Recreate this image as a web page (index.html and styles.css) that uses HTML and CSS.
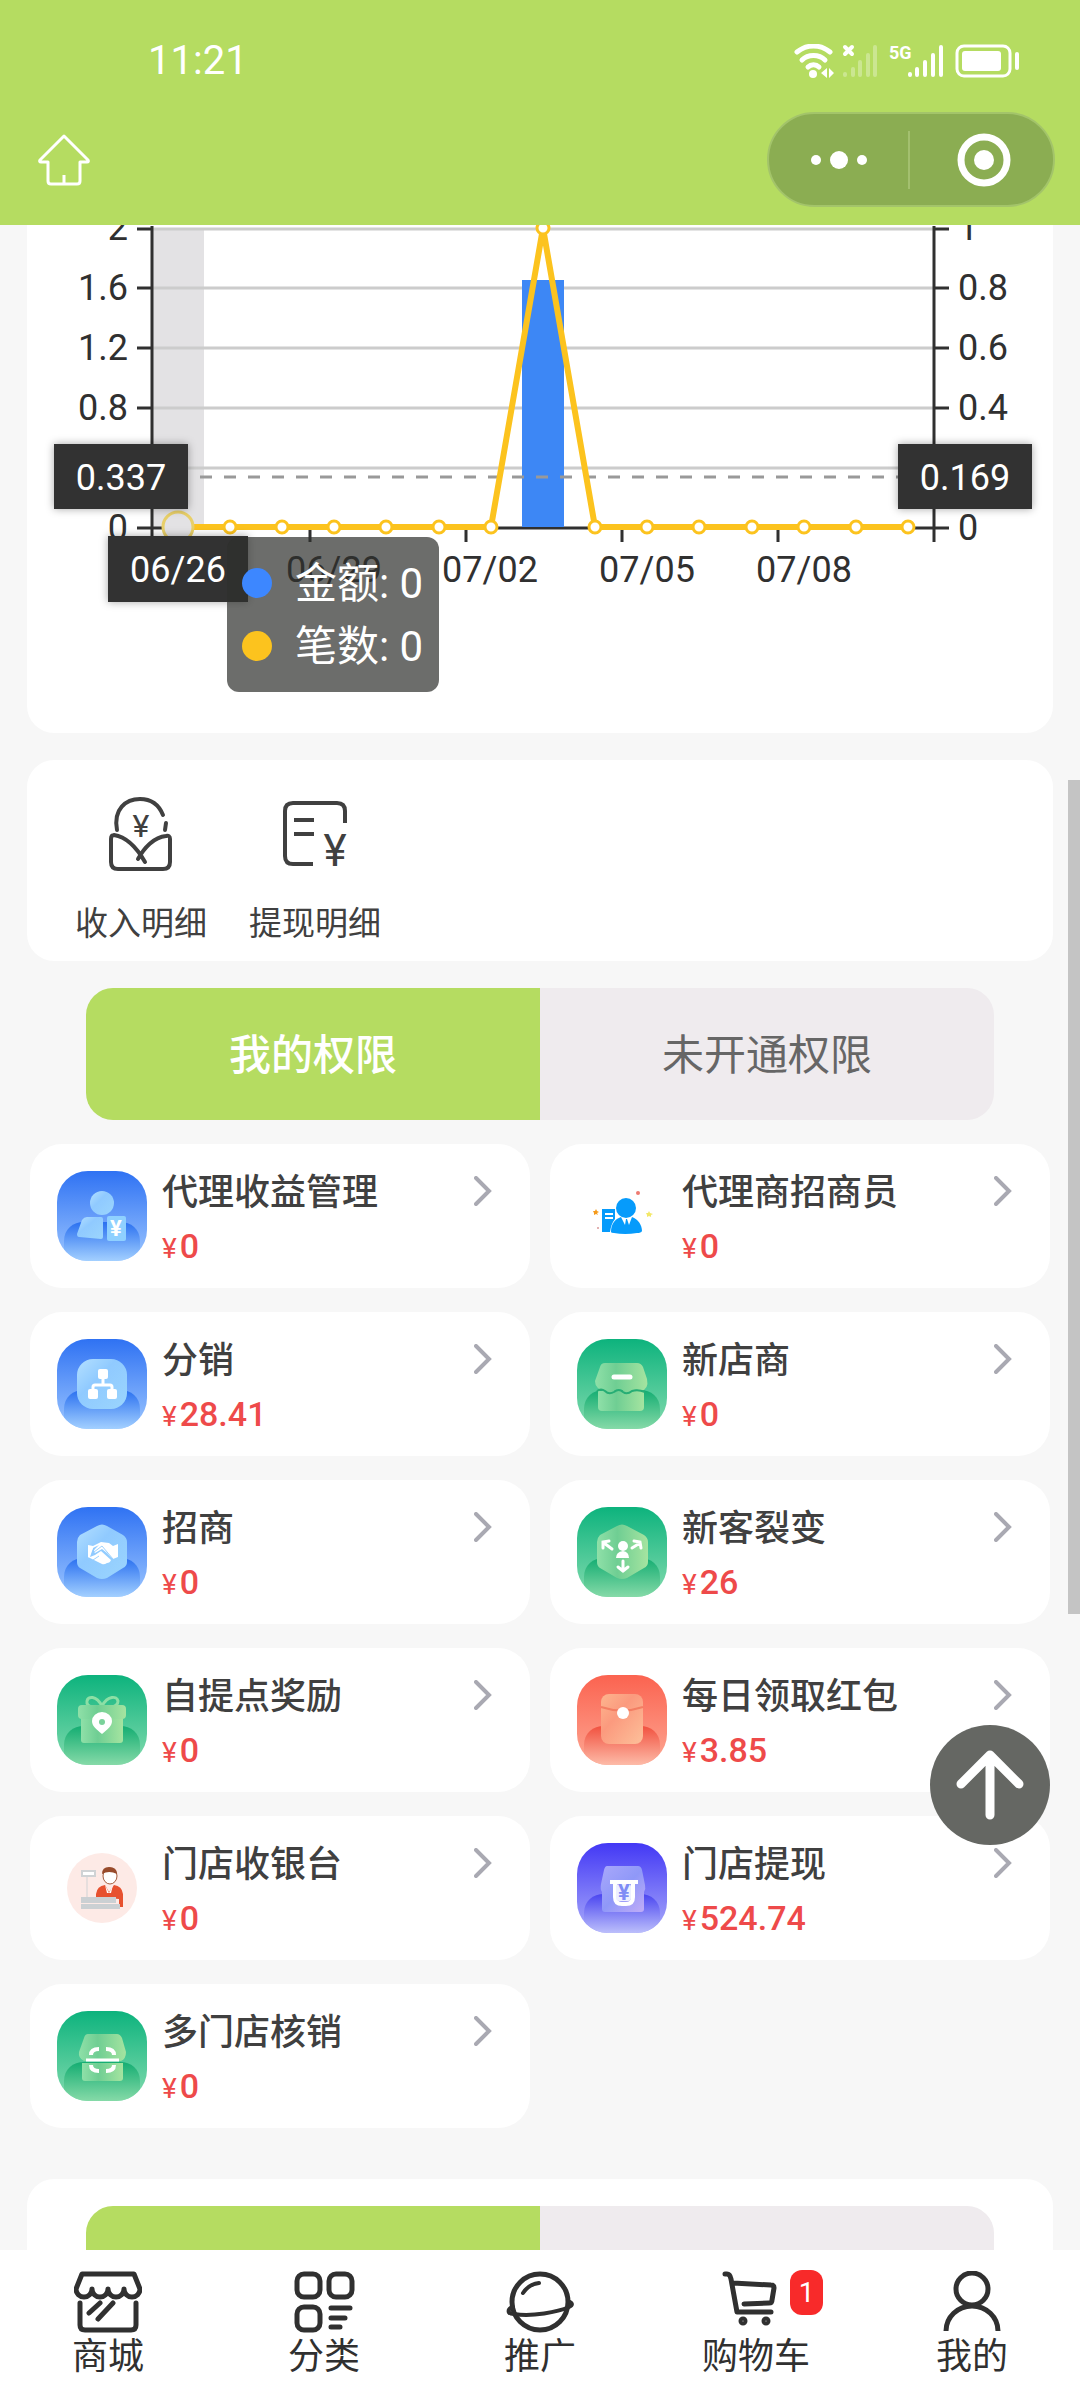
FILE: index.html
```html
<!DOCTYPE html>
<html lang="zh-CN">
<head>
    <meta charset="UTF-8">
    <meta name="viewport" content="width=device-width, initial-scale=1.0">
    <title>我的权限</title>
    <link rel="stylesheet" href="styles.css">
</head>
<body>
    <!-- Shared gradients and shapes -->
    <svg class="defs" width="0" height="0" aria-hidden="true">
        <defs>
            <linearGradient id="blue" x1="0" y1="0" x2="0" y2="1"><stop offset="0" stop-color="#2f72f3"/><stop offset="1" stop-color="#9cc6ff"/></linearGradient>
            <linearGradient id="blueHill" x1="0" y1="0" x2="0" y2="1"><stop offset="0" stop-color="#2a70f0"/><stop offset="1" stop-color="#a3d0ff"/></linearGradient>
            <linearGradient id="blueFront" x1="0" y1="0" x2="1" y2="1"><stop offset="0" stop-color="#b4e0ff"/><stop offset="0.4" stop-color="#90caff"/><stop offset="1" stop-color="#9bd5fd"/></linearGradient>
            <linearGradient id="green" x1="0" y1="0" x2="0" y2="1"><stop offset="0" stop-color="#0db37d"/><stop offset="1" stop-color="#83dbae"/></linearGradient>
            <linearGradient id="greenHill" x1="0" y1="0" x2="0" y2="1"><stop offset="0" stop-color="#14ad72"/><stop offset="1" stop-color="#86daa8"/></linearGradient>
            <linearGradient id="greenFront" x1="0" y1="0" x2="1" y2="0"><stop offset="0" stop-color="#8fe0a8"/><stop offset="0.4" stop-color="#6fce93"/><stop offset="1" stop-color="#a5e4a0"/></linearGradient>
            <linearGradient id="red" x1="0" y1="0" x2="0" y2="1"><stop offset="0" stop-color="#fb6350"/><stop offset="1" stop-color="#fda793"/></linearGradient>
            <linearGradient id="redHill" x1="0" y1="0" x2="0" y2="1"><stop offset="0" stop-color="#f1513f"/><stop offset="1" stop-color="#fdbba8"/></linearGradient>
            <linearGradient id="redFront" x1="0" y1="0" x2="1" y2="1"><stop offset="0" stop-color="#fdb58e"/><stop offset="0.4" stop-color="#fb9a7e"/><stop offset="1" stop-color="#fdc09a"/></linearGradient>
            <linearGradient id="indigo" x1="0" y1="0" x2="0" y2="1"><stop offset="0" stop-color="#4338f5"/><stop offset="1" stop-color="#a9abfa"/></linearGradient>
            <linearGradient id="indigoHill" x1="0" y1="0" x2="0" y2="1"><stop offset="0" stop-color="#4a45f0"/><stop offset="1" stop-color="#bcbffb"/></linearGradient>
            <linearGradient id="indigoFront" x1="0" y1="0" x2="1" y2="1"><stop offset="0" stop-color="#a9a8fb"/><stop offset="0.5" stop-color="#8f98f8"/><stop offset="1" stop-color="#c2adf7"/></linearGradient>
            <filter id="labelShadow" x="-20%" y="-30%" width="140%" height="160%"><feDropShadow dx="0" dy="0" stdDeviation="4" flood-color="#000" flood-opacity="0.35"/></filter>
            <symbol id="hill" viewBox="0 0 90 90"><path d="M7 78V70C7 58 16 51 27 51H63C74 51 83 58 83 70V78A31 31 0 0 1 59 90H31A31 31 0 0 1 7 78Z"/></symbol>
            <symbol id="chevron" viewBox="0 0 18 30"><path d="M2 2L15 15L2 28" fill="none" stroke="#a9a9b2" stroke-width="4" stroke-linecap="round"/></symbol>
        </defs>
    </svg>

    <!-- Header -->
    <header class="header">
        <div class="status-bar">
            <span class="clock">11:21</span>
            <svg class="status-icons" width="226" height="34" viewBox="0 0 226 34" aria-hidden="true">
                <g fill="none" stroke="#fff" stroke-width="5" stroke-linecap="round">
                    <path d="M3 8C13 0 26 0 36 8"/>
                    <path d="M8 16C14 10 25 10 31 16"/>
                    <path d="M14 23C17 20 22 20 25 23"/>
                </g>
                <circle cx="19" cy="30" r="4" fill="#fff"/>
                <path d="M27 29L33 24V34ZM40 29L35 24V34Z" fill="#fff"/>
                <path d="M51 3L58 10M58 3L51 10" stroke="#fff" stroke-width="4" stroke-linecap="round"/>
                <g stroke="#fff" stroke-width="4" stroke-linecap="round" opacity="0.3">
                    <path d="M51 30V31M59 25V31M66 18V31M74 11V31M81 3V31"/>
                </g>
                <text x="95" y="15" class="net">5G</text>
                <path d="M116 30V31M123 25V31M131 18V31M139 11V31M147 3V31" stroke="#fff" stroke-width="4" stroke-linecap="round"/>
                <rect x="163" y="2" width="53" height="30" rx="7" fill="none" stroke="#fff" stroke-width="3"/>
                <rect x="168" y="7" width="39" height="20" rx="3" fill="#fff"/>
                <rect x="221" y="8" width="4" height="18" rx="2" fill="#fff"/>
            </svg>
        </div>
        <div class="nav-bar">
            <button class="home-btn" aria-label="首页">
                <svg width="54" height="52" viewBox="0 0 54 52"><path d="M27 2L51 26Q52 28 50 28H43V47Q43 50 40 50H14Q11 50 11 47V28H4Q2 28 3 26ZM27 41V50" fill="none" stroke="#fff" stroke-width="3" stroke-linejoin="round"/></svg>
            </button>
            <div class="capsule">
                <button aria-label="更多">
                    <svg width="60" height="20" viewBox="0 0 60 20"><circle cx="7" cy="10" r="5"/><circle cx="30" cy="10" r="9"/><circle cx="53" cy="10" r="5"/></svg>
                </button>
                <button aria-label="关闭">
                    <svg width="54" height="54" viewBox="0 0 54 54"><circle cx="27" cy="27" r="23" fill="none" stroke="#fff" stroke-width="7"/><circle cx="27" cy="27" r="10"/></svg>
                </button>
            </div>
        </div>
    </header>

    <main class="page">
        <!-- Income chart -->
        <section class="chart-card">
            <svg class="chart" viewBox="27 225 1026 508" role="img" aria-label="金额和笔数">
                <rect x="152" y="228" width="52" height="300" fill="#e3e2e4"/>
                <path d="M152 229H934M152 288H934M152 348H934M152 408H934M152 468H934" stroke="#ccc" stroke-width="3"/>
                <path d="M137 528H949M152 226V542M934 226V542M310 528V542M466 528V542M622 528V542M778 528V542" stroke="#303030" stroke-width="3" fill="none"/>
                <path d="M137 229H152M137 288H152M137 348H152M137 408H152M934 229H949M934 288H949M934 348H949M934 408H949" stroke="#303030" stroke-width="3"/>
                <rect x="522" y="280" width="42" height="247" fill="#3d87f5"/>
                <path d="M200 477H898" stroke="#999" stroke-width="3" stroke-dasharray="12 12"/>
                <path d="M178 527H491L543 228L595 527H908" fill="none" stroke="#fcc31e" stroke-width="6" stroke-linejoin="bevel"/>
                <g fill="#fff" stroke="#fcc31e" stroke-width="3">
                    <circle cx="178" cy="527" r="15" class="active-dot"/>
                    <circle cx="230" cy="527" r="6"/><circle cx="282" cy="527" r="6"/><circle cx="334" cy="527" r="6"/>
                    <circle cx="386" cy="527" r="6"/><circle cx="439" cy="527" r="6"/><circle cx="491" cy="527" r="6"/>
                    <circle cx="543" cy="228" r="6"/>
                    <circle cx="595" cy="527" r="6"/><circle cx="647" cy="527" r="6"/><circle cx="699" cy="527" r="6"/>
                    <circle cx="752" cy="527" r="6"/><circle cx="804" cy="527" r="6"/><circle cx="856" cy="527" r="6"/><circle cx="908" cy="527" r="6"/>
                </g>
                <g class="axis-left">
                    <text x="128" y="240">2</text>
                    <text x="128" y="300">1.6</text>
                    <text x="128" y="360">1.2</text>
                    <text x="128" y="420">0.8</text>
                    <text x="128" y="540">0</text>
                </g>
                <g class="axis-right">
                    <text x="958" y="240">1</text>
                    <text x="958" y="300">0.8</text>
                    <text x="958" y="360">0.6</text>
                    <text x="958" y="420">0.4</text>
                    <text x="958" y="540">0</text>
                </g>
                <g class="axis-bottom">
                    <text x="334" y="582">06/29</text>
                    <text x="490" y="582">07/02</text>
                    <text x="647" y="582">07/05</text>
                    <text x="804" y="582">07/08</text>
                </g>
                <g class="pointer">
                    <rect x="54" y="444" width="134" height="65"/>
                    <text x="121" y="490">0.337</text>
                    <rect x="898" y="444" width="134" height="65"/>
                    <text x="965" y="490">0.169</text>
                    <rect x="108" y="536" width="140" height="66"/>
                    <text x="178" y="582">06/26</text>
                </g>
                <!-- Tooltip -->
                <g class="tooltip">
                    <rect x="227" y="537" width="212" height="155" rx="12"/>
                    <circle cx="257" cy="583" r="15" fill="#3d87ff"/>
                    <text x="295" y="598">金额: 0</text>
                    <circle cx="257" cy="646" r="15" fill="#fcc31e"/>
                    <text x="295" y="661">笔数: 0</text>
                </g>
            </svg>
        </section>

        <!-- Detail links -->
        <nav class="details">
            <a href="#" class="detail">
                <svg width="64" height="76" viewBox="0 0 64 76" class="line-icon">
                    <path d="M8 33C4 12 17 2 31 2C42 2 50 8 54 18M57 26L56 33"/>
                    <path d="M5 38Q2 38 2 42V65Q2 72 9 72H54Q61 72 61 65V42Q61 38 57 39C45 40 35 51 29 62M5 38C18 40 28 51 36 65"/>
                    <text x="32" y="40" class="yen-small">¥</text>
                </svg>
                <span>收入明细</span>
            </a>
            <a href="#" class="detail">
                <svg width="64" height="76" viewBox="0 0 64 76" class="line-icon square">
                    <path d="M30 67H10Q2 67 2 59V14Q2 6 10 6H54Q62 6 62 14V26M11 23H31M11 37H31"/>
                    <text x="52" y="69" class="yen-big">¥</text>
                </svg>
                <span>提现明细</span>
            </a>
        </nav>

        <!-- Permission tabs -->
        <div class="tabs">
            <button class="tab active">我的权限</button>
            <button class="tab">未开通权限</button>
        </div>

        <div class="grid">
            <a href="#" class="card">
                <svg class="app-icon" viewBox="0 0 90 90">
                    <rect width="90" height="90" rx="31" fill="url(#blue)"/>
                    <use href="#hill" fill="url(#blueHill)"/>
                    <circle cx="45" cy="32" r="12" fill="url(#blueFront)"/>
                    <path d="M30 46H44Q46 46 46 48V66Q46 68 44 68L22 66Q20 66 20 63L25 49Q27 46 30 46Z" fill="url(#blueFront)"/>
                    <rect x="50" y="45" width="19" height="25" rx="2" fill="#8fd0ff"/>
                    <text x="59" y="65" class="icon-yen">¥</text>
                </svg>
                <div class="info"><h3>代理收益管理</h3><p><small>¥</small>0</p></div>
                <svg class="arrow"><use href="#chevron"/></svg>
            </a>
            <a href="#" class="card">
                <svg class="app-icon" viewBox="0 0 90 90">
                    <path d="M25 38H38V48Q34 53 33 61H25Z" fill="#069bfb"/>
                    <path d="M28 43H36M28 47H36" stroke="#fff" stroke-width="2"/>
                    <circle cx="49" cy="37" r="10" fill="#069bfb"/>
                    <path d="M34 61C34 53 38 48 44 46L48 54L49 48H50L52 54L55 46C61 48 65 54 65 60Q64 62 60 62Q48 64 37 62Q34 62 34 61Z" fill="#069bfb"/>
                    <circle cx="61" cy="22" r="2" fill="#ee7a70"/>
                    <path d="M19 38L20 40L22 41L20 42L21 44L19 43L17 44L17 42L16 40L18 40Z" fill="#f59a1b"/>
                    <path d="M72 40L73 42L76 43L74 44L74 46L72 45L70 46L70 44L69 42L71 42Z" fill="#f3e868"/>
                    <circle cx="21" cy="57" r="1" fill="#d89898"/>
                </svg>
                <div class="info"><h3>代理商招商员</h3><p><small>¥</small>0</p></div>
                <svg class="arrow"><use href="#chevron"/></svg>
            </a>
            <a href="#" class="card">
                <svg class="app-icon" viewBox="0 0 90 90">
                    <rect width="90" height="90" rx="31" fill="url(#blue)"/>
                    <use href="#hill" fill="url(#blueHill)"/>
                    <rect x="20" y="20" width="50" height="50" rx="16" fill="url(#blueFront)"/>
                    <rect x="41" y="30" width="10" height="10" rx="2" fill="#fff"/>
                    <rect x="31" y="50" width="10" height="10" rx="2" fill="#fff"/>
                    <rect x="50" y="50" width="10" height="10" rx="2" fill="#fff"/>
                    <path d="M46 39V46M36 51V48Q36 46 38 46H53Q55 46 55 48V51" fill="none" stroke="#fff" stroke-width="3"/>
                </svg>
                <div class="info"><h3>分销</h3><p><small>¥</small>28.41</p></div>
                <svg class="arrow"><use href="#chevron"/></svg>
            </a>
            <a href="#" class="card">
                <svg class="app-icon" viewBox="0 0 90 90">
                    <rect width="90" height="90" rx="31" fill="url(#green)"/>
                    <use href="#hill" fill="url(#greenHill)"/>
                    <path d="M21 52H67V68Q67 72 63 72H25Q21 72 21 68Z" fill="url(#greenFront)"/>
                    <path d="M28 24H60Q64 24 66 28L70 40Q72 50 64 52Q58 49 55 52Q50 56 45 51Q40 49 37 52Q32 56 28 52Q18 50 18 42L23 28Q24 24 28 24Z" fill="url(#greenFront)"/>
                    <path d="M20 52Q24 49 28 52Q32 56 37 53Q42 49 46 53Q50 56 55 52Q61 50 68 53" fill="none" stroke="#27ad75" stroke-width="2"/>
                    <path d="M37 38H53" stroke="#fff" stroke-width="5" stroke-linecap="round"/>
                </svg>
                <div class="info"><h3>新店商</h3><p><small>¥</small>0</p></div>
                <svg class="arrow"><use href="#chevron"/></svg>
            </a>
            <a href="#" class="card">
                <svg class="app-icon" viewBox="0 0 90 90">
                    <rect width="90" height="90" rx="31" fill="url(#blue)"/>
                    <use href="#hill" fill="url(#blueHill)"/>
                    <path d="M40 19Q45 16 50 19L66 28Q70 31 70 35V55Q70 59 66 61L50 71Q45 73 40 71L23 61Q20 59 20 55V35Q20 31 23 28Z" fill="url(#blueFront)"/>
                    <path d="M31 38L36 39L44 35L52 36L56 39L61 37V50L56 52L50 46L45 42L38 46Q36 44 38 42L42 38L36 41L31 51Z" fill="#fff"/>
                    <path d="M31 41L36 41L33 50L38 48L44 44L54 53Q53 56 50 56Q47 58 45 57L31 50Z" fill="#fff"/>
                    <path d="M37 45L45 39L56 52M36 53L42 49" fill="none" stroke="#9ed2fd" stroke-width="1"/>
                </svg>
                <div class="info"><h3>招商</h3><p><small>¥</small>0</p></div>
                <svg class="arrow"><use href="#chevron"/></svg>
            </a>
            <a href="#" class="card">
                <svg class="app-icon" viewBox="0 0 90 90">
                    <rect width="90" height="90" rx="31" fill="url(#green)"/>
                    <use href="#hill" fill="url(#greenHill)"/>
                    <path d="M40 19Q45 16 50 19L67 28Q71 31 71 35V55Q71 59 67 61L50 71Q45 73 40 71L23 61Q20 59 20 55V35Q20 31 23 28Z" fill="url(#greenFront)"/>
                    <circle cx="46" cy="39" r="5" fill="#fff"/>
                    <path d="M39 51Q39 45 46 44Q52 45 52 51Z" fill="#fff"/>
                    <g fill="none" stroke="#fff" stroke-width="3" stroke-linecap="round">
                        <path d="M35 42L27 36M26 41V35L32 34"/>
                        <path d="M55 41L63 36M57 34L63 35L64 41"/>
                        <path d="M46 54V64M41 60L46 64L51 60"/>
                    </g>
                </svg>
                <div class="info"><h3>新客裂变</h3><p><small>¥</small>26</p></div>
                <svg class="arrow"><use href="#chevron"/></svg>
            </a>
            <a href="#" class="card">
                <svg class="app-icon" viewBox="0 0 90 90">
                    <rect width="90" height="90" rx="31" fill="url(#green)"/>
                    <use href="#hill" fill="url(#greenHill)"/>
                    <path d="M45 31C39 20 31 21 30 26Q29 31 36 32M45 31C51 20 60 21 61 26Q61 31 54 32" fill="none" stroke="#8cdfa5" stroke-width="3"/>
                    <rect x="24" y="36" width="42" height="32" rx="3" fill="url(#greenFront)"/>
                    <rect x="21" y="30" width="48" height="14" rx="4" fill="url(#greenFront)"/>
                    <path d="M45 59C39 54 35 51 35 46A10 9 0 0 1 55 46C55 51 51 54 45 59Z" fill="#fff"/>
                    <circle cx="45" cy="47" r="3" fill="#7ad29a"/>
                </svg>
                <div class="info"><h3>自提点奖励</h3><p><small>¥</small>0</p></div>
                <svg class="arrow"><use href="#chevron"/></svg>
            </a>
            <a href="#" class="card">
                <svg class="app-icon" viewBox="0 0 90 90">
                    <rect width="90" height="90" rx="31" fill="url(#red)"/>
                    <use href="#hill" fill="url(#redHill)"/>
                    <rect x="24" y="19" width="42" height="50" rx="8" fill="url(#redFront)"/>
                    <path d="M24 32Q45 39 66 32" fill="none" stroke="#f37e63" stroke-width="2"/>
                    <circle cx="46" cy="38" r="6" fill="#fff"/>
                </svg>
                <div class="info"><h3>每日领取红包</h3><p><small>¥</small>3.85</p></div>
                <svg class="arrow"><use href="#chevron"/></svg>
            </a>
            <a href="#" class="card">
                <svg class="app-icon" viewBox="0 0 90 90">
                    <circle cx="45" cy="45" r="35" fill="#fdeae6"/>
                    <path d="M39 54V51Q40 43 48 42L52 49L57 42Q65 43 66 51V64H62V56Z" fill="#e7512f"/>
                    <path d="M48 42L52 50L56 42L54 50H50Z" fill="#fff"/>
                    <ellipse cx="53" cy="33" rx="7" ry="8" fill="#fff" stroke="#a55b3c" stroke-width="1"/>
                    <path d="M45 31Q45 24 52 24Q60 24 60 31Q52 27 45 31Z" fill="#984b2b"/>
                    <rect x="24" y="27" width="15" height="7" fill="#d0d3d5"/>
                    <rect x="26" y="29" width="11" height="3" fill="#fff"/>
                    <path d="M30 34V54" stroke="#d0d3d5" stroke-width="1"/>
                    <rect x="24" y="54" width="35" height="6" fill="#cbd0d3"/>
                    <rect x="24" y="61" width="39" height="5" fill="#cbd0d3"/>
                </svg>
                <div class="info"><h3>门店收银台</h3><p><small>¥</small>0</p></div>
                <svg class="arrow"><use href="#chevron"/></svg>
            </a>
            <a href="#" class="card">
                <svg class="app-icon" viewBox="0 0 90 90">
                    <rect width="90" height="90" rx="31" fill="url(#indigo)"/>
                    <use href="#hill" fill="url(#indigoHill)"/>
                    <path d="M30 23H61Q64 23 65 27L68 42Q69 46 67 49V66Q67 69 64 69H28Q25 69 25 66V49Q23 46 24 41L27 27Q28 23 30 23Z" fill="url(#indigoFront)"/>
                    <path d="M33 39H61M38 39V54Q38 61 45 61H49Q56 61 56 54V39" fill="none" stroke="#fff" stroke-width="4" stroke-linejoin="round"/>
                    <rect x="39" y="41" width="15" height="17" rx="3" fill="#eef0ff"/>
                    <text x="47" y="57" class="icon-yen indigo">¥</text>
                </svg>
                <div class="info"><h3>门店提现</h3><p><small>¥</small>524.74</p></div>
                <svg class="arrow"><use href="#chevron"/></svg>
            </a>
            <a href="#" class="card">
                <svg class="app-icon" viewBox="0 0 90 90">
                    <rect width="90" height="90" rx="31" fill="url(#green)"/>
                    <use href="#hill" fill="url(#greenHill)"/>
                    <path d="M31 23H60Q63 23 65 27L69 41Q69 48 64 50H27Q21 47 22 41L27 27Q28 23 31 23Z" fill="url(#greenFront)"/>
                    <path d="M25 52H66V67Q66 70 63 70H28Q25 70 25 67Z" fill="url(#greenFront)"/>
                    <path d="M29 49H62" stroke="#fff" stroke-width="3"/>
                    <path d="M34 44Q34 38 42 38M49 38Q57 38 57 44M34 54Q34 60 42 60M49 60Q57 60 57 54" fill="none" stroke="#fff" stroke-width="4"/>
                </svg>
                <div class="info"><h3>多门店核销</h3><p><small>¥</small>0</p></div>
                <svg class="arrow"><use href="#chevron"/></svg>
            </a>
        </div>

        <!-- Next section, continues under the tab bar -->
        <section class="next-card">
            <div class="tabs">
                <button class="tab active" aria-label="左"></button>
                <button class="tab" aria-label="右"></button>
            </div>
        </section>

        <div class="scrollbar"></div>
        <button class="to-top" aria-label="返回顶部">
            <svg width="68" height="70" viewBox="0 0 68 70"><path d="M5 34L34 5L63 34M34 8V65" fill="none" stroke="#fff" stroke-width="9" stroke-linecap="round" stroke-linejoin="round"/></svg>
        </button>
    </main>

    <!-- Bottom tab bar -->
    <nav class="tab-bar">
        <a href="#">
            <svg viewBox="0 0 68 62"><path d="M8 3H60L66 18A8 8 0 0 1 50 18A8 8 0 0 1 34 18A8 8 0 0 1 18 18A8 8 0 0 1 2 18ZM6 32V54Q6 59 11 59H57Q62 59 62 54V32M26 32L15 42M39 32L24 48"/></svg>
            <span>商城</span>
        </a>
        <a href="#">
            <svg viewBox="0 0 68 62"><rect x="7" y="3" width="23" height="23" rx="7"/><rect x="39" y="3" width="23" height="23" rx="7"/><rect x="7" y="36" width="23" height="23" rx="7"/><path d="M41 37H60M41 47H55M41 56H50"/></svg>
            <span>分类</span>
        </a>
        <a href="#">
            <svg viewBox="0 0 68 62"><circle cx="34" cy="31" r="28"/><path d="M17 22Q23 13 33 12M7 36C1 38 1 43 8 43C26 46 52 41 63 36C67 34 67 32 62 30" class="thin"/></svg>
            <span>推广</span>
        </a>
        <a href="#" class="cart">
            <svg viewBox="0 0 68 62"><path d="M3 3H5Q8 3 9 8L15 41H49M11 12L49 14Q52 14 52 17L50 29Q50 32 47 32L22 33"/><circle cx="21" cy="50" r="2"/><circle cx="44" cy="50" r="2"/></svg>
            <em class="badge">1</em>
            <span>购物车</span>
        </a>
        <a href="#">
            <svg viewBox="0 0 68 62"><circle cx="34" cy="18" r="16"/><path d="M8 60A26 25 0 0 1 60 60" class="flat"/></svg>
            <span>我的</span>
        </a>
    </nav>
</body>
</html>
```
FILE: styles.css
```css
/* General Styles */
* {
    box-sizing: border-box;
}

body {
    margin: 0;
    height: 100vh;
    display: flex;
    flex-direction: column;
    overflow: hidden;
    background-color: #f7f7f7;
    font-family: Roboto, "Noto Sans CJK SC", sans-serif;
    color: #404040;
}

button {
    border: none;
    padding: 0;
    background: none;
    font-family: inherit;
    cursor: pointer;
}

a {
    color: inherit;
    text-decoration: none;
}

svg {
    display: block;
    flex-shrink: 0;
}

.defs {
    position: absolute;
}

/* Header */
.header {
    flex-shrink: 0;
    background-color: #b5dc61;
}

.status-bar {
    display: flex;
    justify-content: space-between;
    align-items: center;
    padding: 37px 60px 0 148px;
}

.clock {
    font-size: 40px;
    line-height: 48px;
    color: #fff;
}

.net {
    font-size: 18px;
    font-weight: 700;
    fill: #fff;
}

.nav-bar {
    display: flex;
    justify-content: space-between;
    align-items: center;
    padding: 27px 25px 18px 37px;
}

.capsule {
    display: flex;
    align-items: center;
    width: 288px;
    height: 95px;
    background-color: #8bad52;
    border: 2px solid #a3c46a;
    border-radius: 48px;
}

.capsule button {
    flex: 1;
    height: 58px;
    display: flex;
    justify-content: center;
    align-items: center;
}

.capsule button + button {
    border-left: 2px solid #a3c06f;
    padding-left: 4px;
}

.capsule svg {
    fill: #fff;
}

/* Scrolled page */
.page {
    flex: 1;
    min-height: 0;
    overflow: hidden;
    position: relative;
}

.chart-card {
    margin: 0 27px;
    background-color: #fff;
    border-radius: 0 0 27px 27px;
}

.chart {
    width: 100%;
    font-size: 36px;
    fill: #303030;
}

.active-dot {
    fill: #e3e2e4;
    stroke: #e8cf68;
}

.axis-left {
    text-anchor: end;
}

.axis-bottom,
.pointer {
    text-anchor: middle;
}

.pointer rect {
    fill: #303030;
    filter: url(#labelShadow);
}

.pointer text {
    fill: #fff;
}

.tooltip rect {
    fill: rgba(45, 47, 44, 0.7);
}

.tooltip text {
    font-size: 42px;
    fill: #fff;
}

/* Detail links */
.details {
    display: flex;
    margin: 27px 27px 0;
    padding: 37px 27px 13px;
    background-color: #fff;
    border-radius: 27px;
}

.detail {
    width: 174px;
    display: flex;
    flex-direction: column;
    align-items: center;
    gap: 27px;
    font-size: 33px;
    line-height: 48px;
}

.line-icon path {
    fill: none;
    stroke: #404040;
    stroke-width: 4;
    stroke-linecap: round;
}

.line-icon.square path {
    stroke-linecap: butt;
}

.line-icon text {
    fill: #404040;
    text-anchor: middle;
}

.yen-small {
    font-size: 32px;
}

.yen-big {
    font-size: 44px;
}

/* Tabs */
.tabs {
    display: flex;
    height: 132px;
    margin: 27px 86px 24px;
    border-radius: 27px;
    overflow: hidden;
}

.tab {
    flex: 1;
    padding-bottom: 5px;
    background-color: #efebee;
    color: #666;
    font-size: 42px;
}

.tab.active {
    background-color: #b5dc61;
    color: #fff;
    font-weight: 500;
}

/* Permission cards */
.grid {
    display: grid;
    grid-template-columns: 1fr 1fr;
    gap: 24px 20px;
    padding: 0 30px;
}

.card {
    display: flex;
    align-items: flex-start;
    gap: 15px;
    padding: 27px 38px 18px 27px;
    background-color: #fff;
    border-radius: 32px;
}

.app-icon {
    width: 90px;
    height: 90px;
}

.icon-yen {
    font-size: 22px;
    font-weight: 700;
    text-anchor: middle;
    fill: #fff;
}

.icon-yen.indigo {
    fill: #7f8cf5;
}

.info {
    flex: 1;
}

.info h3 {
    margin: 0;
    font-size: 36px;
    line-height: 44px;
    font-weight: 500;
}

.info p {
    margin: 7px 0 0;
    font-size: 34px;
    line-height: 48px;
    font-weight: 500;
    color: #ee4a4a;
}

.info small {
    font-size: 28px;
    line-height: 1;
    font-weight: 400;
    margin-right: 3px;
}

.arrow {
    width: 18px;
    height: 30px;
    margin-top: 5px;
}

.next-card {
    margin: 51px 27px 0;
    padding: 27px 0;
    background-color: #fff;
    border-radius: 27px;
}

.next-card .tabs {
    margin: 0 59px;
}

/* Floating parts */
.scrollbar {
    position: absolute;
    top: 555px;
    right: 0;
    width: 12px;
    height: 834px;
    background-color: #c4c4c4;
}

.to-top {
    position: absolute;
    right: 30px;
    bottom: 405px;
    width: 120px;
    height: 120px;
    display: flex;
    justify-content: center;
    align-items: center;
    border-radius: 50%;
    background-color: #656763;
}

/* Bottom tab bar */
.tab-bar {
    flex-shrink: 0;
    display: flex;
    height: 150px;
    padding-top: 21px;
    background-color: #fff;
    color: #303030;
}

.tab-bar a {
    flex: 1;
    position: relative;
    display: flex;
    flex-direction: column;
    align-items: center;
    font-size: 36px;
    line-height: 48px;
}

.tab-bar svg {
    width: 68px;
    height: 62px;
    fill: none;
    stroke: #303030;
    stroke-width: 5;
    stroke-linecap: round;
    stroke-linejoin: round;
}

.tab-bar .thin {
    stroke-width: 4;
}

.tab-bar .flat {
    stroke-linecap: butt;
}

.badge {
    position: absolute;
    top: -1px;
    left: 50%;
    margin-left: 34px;
    width: 33px;
    height: 45px;
    border-radius: 12px;
    background-color: #f82a2a;
    color: #fff;
    font-size: 28px;
    line-height: 45px;
    font-style: normal;
    text-align: center;
}
```
